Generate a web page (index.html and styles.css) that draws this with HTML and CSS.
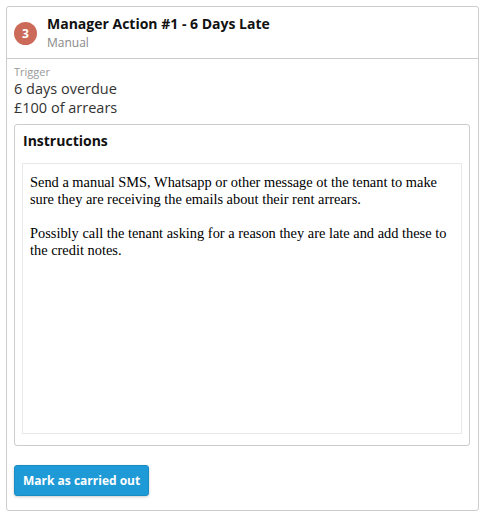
FILE: index.html
```html
<!DOCTYPE html>
<html>
<head>
<meta charset="utf-8">
<link rel="stylesheet" href="styles.css">
</head>
<body>
<div class="card">
  <div class="card-header">
    <div class="badge">3</div>
    <div class="heading">
      <div class="title">Manager Action #1 - 6 Days Late</div>
      <div class="subtitle">Manual</div>
    </div>
  </div>
  <div class="card-body">
    <div class="label">Trigger</div>
    <div class="value">6 days overdue</div>
    <div class="value">£100 of arrears</div>
    <div class="panel">
      <div class="panel-title">Instructions</div>
      <div class="textbox">
        <p>Send a manual SMS, Whatsapp or other message ot the tenant to make sure they are receiving the emails about their rent arrears.</p>
        <p>Possibly call the tenant asking for a reason they are late and add these to the credit notes.</p>
      </div>
    </div>
    <button class="btn">Mark as carried out</button>
  </div>
</div>
</body>
</html>
```
FILE: styles.css
```css
html, body {
  margin: 0;
  padding: 0;
  background: #fff;
}
body {
  padding: 6px 3px 5px 6px;
  font-family: "Open Sans", "Noto Sans", sans-serif;
  color: #222;
}
.card {
  border: 1px solid #cccccc;
  border-radius: 3px;
  box-sizing: border-box;
  height: 505px;
  display: flex;
  flex-direction: column;
}
.card-header {
  display: flex;
  align-items: center;
  gap: 10px;
  padding: 0 7px;
  height: 51px;
  border-bottom: 1px solid #cccccc;
}
.badge {
  width: 23px;
  height: 23px;
  border-radius: 50%;
  background: #cc6a5a;
  color: #fff;
  font-weight: 700;
  font-size: 12px;
  display: flex;
  align-items: center;
  justify-content: center;
  flex: none;
  margin-top: 2px;
}
.heading {
  display: flex;
  flex-direction: column;
}
.title {
  font-size: 14px;
  font-weight: 700;
  color: #111;
  line-height: 19px;
}
.subtitle {
  font-size: 12px;
  color: #888;
  line-height: 16px;
  margin-top: 2px;
}
.card-body {
  padding: 6px 8px 0 7px;
  display: flex;
  flex-direction: column;
  align-items: flex-start;
}
.label {
  font-size: 11px;
  color: #999;
  line-height: 14px;
}
.value {
  font-size: 14.5px;
  color: #333;
  line-height: 19px;
}
.panel {
  align-self: stretch;
  margin-top: 7px;
  border: 1px solid #cccccc;
  border-radius: 3px;
  padding: 0 7px 11px 7px;
  display: flex;
  flex-direction: column;
}
.panel-title {
  font-size: 14px;
  font-weight: 700;
  color: #111;
  line-height: 19px;
  padding: 6px 0 13px 1px;
}
.textbox {
  border: 1px solid #e8e8e8;
  padding: 10px 7px 9px;
  box-sizing: border-box;
  height: 271px;
  font-family: "Liberation Serif", "Times New Roman", serif;
  font-size: 14.4px;
  line-height: 17px;
  color: #000;
}
.textbox p {
  margin: 0 0 17px 0;
}
.btn {
  margin-top: 19px;
  background: #1e9ad6;
  color: #fff;
  border: 1px solid #1a8cc4;
  border-radius: 3px;
  font-family: "Open Sans", "Noto Sans", sans-serif;
  font-weight: 700;
  font-size: 12px;
  height: 31px;
  padding: 0 8px;
  box-shadow: 0 1px 3px rgba(0,0,0,0.2);
}
```
